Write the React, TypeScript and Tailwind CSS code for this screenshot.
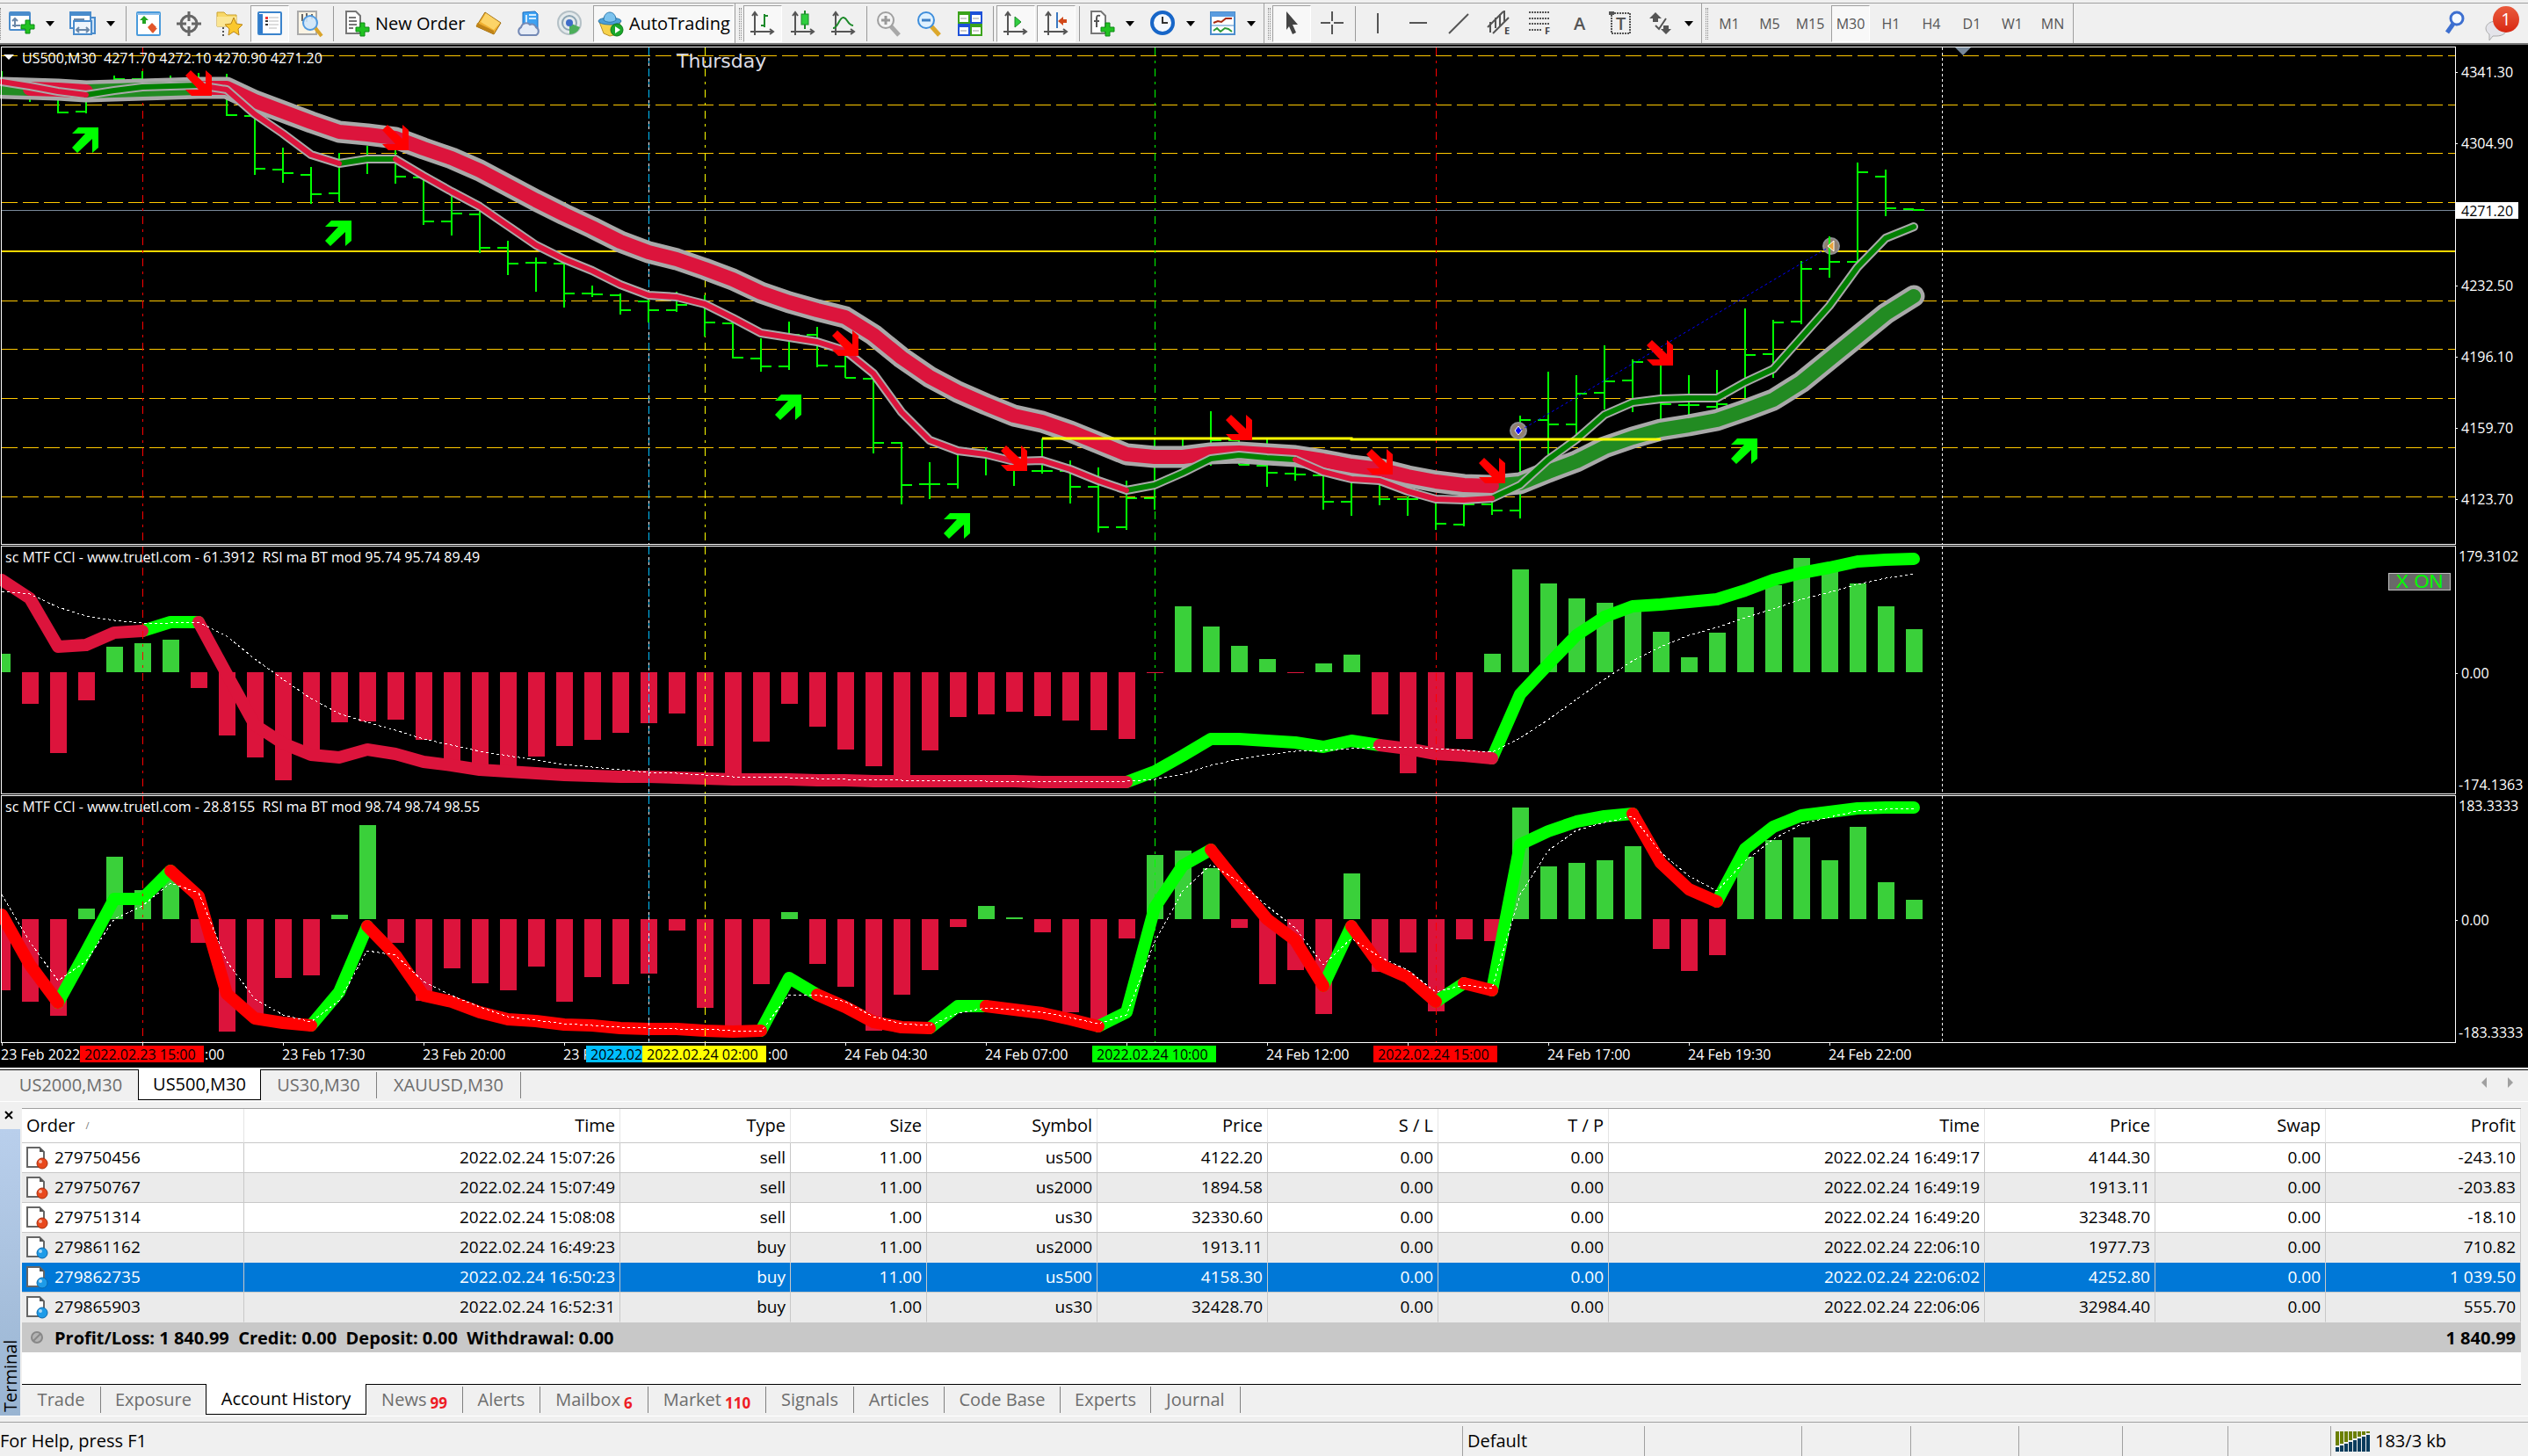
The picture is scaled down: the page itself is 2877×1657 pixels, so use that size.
import React from 'react'
import clsx from 'clsx'

const CRIMSON = '#dc143c'
const LIME = '#00ff00'
const RED = '#ff0000'
const GREEN = '#008000'
const FOREST = '#228b22'
const GOLD = '#ffc800'

// Bars are spaced evenly, the three chart windows share the same x axis
const barX = (i: number) => 2 + i * 32

// [high, low, open, close]
type Bar = [number, number, number | null, number | null]

const bars: Bar[] = [
  [81, 100, null, null], [90, 116, null, null], [108, 129, null, 128], [108, 129, 127, null],
  [86, 104, null, 90], [81, 100, 90, null], [86, 100, null, null], [83, 100, null, null],
  [84, 132, null, 131], [130, 199, 132, 192], [168, 208, 193, 197], [190, 232, 199, 221],
  [174, 230, 220, null], [166, 198, null, null], [170, 209, null, 201], [200, 256, 202, 252],
  [220, 268, 252, 243], [240, 288, 244, 282], [274, 313, 282, 300], [293, 332, 299, 299],
  [299, 350, 300, 334], [325, 338, 334, 335], [334, 358, 336, 353], [337, 367, 343, 353],
  [332, 355, 353, 347], [336, 383, null, 367], [368, 408, 368, 407], [385, 423, 408, 417],
  [366, 421, 417, 381], [372, 418, 381, 416], [385, 430, 417, 430], [425, 516, 431, 504],
  [503, 574, 504, 552], [526, 568, 551, 551], [515, 556, 551, null], [509, 541, null, null],
  [528, 553, null, null], [499, 539, 536, 536], [524, 573, 536, 554], [532, 606, 554, 600],
  [547, 603, 600, 567], [500, 580, 567, null], [500, 540, null, null], [468, 530, null, 501],
  [500, 529, 501, 529], [500, 554, 530, 538], [520, 547, 539, 540], [530, 580, 541, 571],
  [550, 587, 571, null], [548, 575, null, 568], [565, 587, 568, 568], [571, 603, null, 596],
  [574, 599, 597, 574], [571, 586, 574, 581], [473, 590, 581, 478], [423, 520, 478, 483],
  [427, 497, 483, 448], [393, 466, 447, 434], [409, 469, 433, 412], [412, 477, 412, 460],
  [427, 472, 461, 461], [421, 467, 463, 460], [351, 453, null, 404], [364, 430, 403, 367],
  [297, 369, 366, 306], [269, 316, 306, 298], [185, 298, 298, 196], [193, 246, 201, 237],
  [238, 240, 238, 239],
]

const slowMa = [
  100, 101, 102, 104, 103, 102, 101, 100, 100, 115, 127, 139, 150, 153, 157, 169, 180, 194, 211,
  228, 244, 259, 275, 287, 295, 306, 318, 333, 344, 353, 361, 381, 407, 429, 446, 460, 473, 480,
  491, 504, 517, 520, 520, 516, 515, 517, 519, 524, 530, 534, 542, 548, 552, 553, 550, 537, 525,
  509, 498, 489, 484, 478, 467, 455, 435, 409, 383, 357, 337,
]

const fastMa = [
  93, 98, 104, 108, 103, 99, 98, 97, 102, 130, 152, 176, 186, 181, 181, 200, 218, 235, 257, 279,
  295, 308, 324, 336, 338, 346, 362, 379, 384, 389, 399, 425, 469, 501, 513, 517, 525, 524, 534,
  547, 558, 552, 538, 522, 518, 521, 523, 537, 545, 547, 559, 568, 569, 567, 552, 523, 500, 472,
  458, 454, 453, 453, 435, 420, 384, 348, 304, 271, 258,
]

type Run = [from: number, to: number, color: string]

const slowRuns: Run[] = [[0, 1, FOREST], [3, 7, FOREST], [53, 68, FOREST], [1, 3, CRIMSON], [7, 53, CRIMSON]]
const fastRuns: Run[] = [
  [3, 7, GREEN], [12, 14, GREEN], [40, 46, GREEN], [53, 68, GREEN],
  [0, 3, CRIMSON], [7, 12, CRIMSON], [14, 40, CRIMSON], [46, 53, CRIMSON],
]

const cciSlow = [
  21, -36, -92, -32, 29, 33, 37, -18, -72, -97, -123, -95, -57, -56, -54, -77, -102, -108, -110,
  -96, -84, -77, -69, -58, -47, -84, -119, -79, -36, -62, -88, -107, -119, -89, -51, -48, -45, -50,
  -55, -66, -76, -1, 75, 52, 30, 15, -1, 10, 20, -48, -115, -92, -76, 21, 117, 101, 84, 79, 72, 46,
  17, 45, 74, 99, 130, 116, 101, 75, 49,
]
const rsiSlow = [
  660, 681, 736, 734, 720, 718, 708, 708, 767, 825, 846, 859, 862, 853, 858, 867, 871, 876, 878,
  880, 882, 883, 884, 884, 885, 886, 887, 887, 887, 888, 888, 889, 889, 889, 889, 889, 889, 890,
  890, 890, 890, 878, 860, 841, 841, 843, 845, 850, 843, 848, 852, 858, 860, 863, 790, 756, 723,
  702, 690, 688, 685, 682, 672, 660, 652, 646, 639, 637, 636,
]
const signalSlow = [
  673, 676, 691, 701, 706, 709, 709, 708, 724, 750, 773, 795, 812, 822, 831, 841, 848, 855, 860,
  865, 870, 873, 876, 879, 880, 882, 884, 884, 885, 886, 887, 887, 888, 888, 888, 889, 889, 889,
  889, 889, 889, 887, 881, 871, 864, 859, 855, 854, 852, 850, 850, 852, 854, 856, 840, 819, 796,
  773, 752, 736, 723, 714, 703, 693, 682, 674, 665, 658, 653,
]
const rsiSlowRuns: Run[] = [
  [5, 7, LIME], [40, 49, LIME], [53, 68, LIME], [0, 5, CRIMSON], [7, 40, CRIMSON], [49, 53, CRIMSON],
]

const cciFast = [
  -81, -94, -110, 12, 71, 33, 53, -27, -128, -114, -67, -64, 5, 107, -27, -93, -56, -73, -81, -54,
  -94, -66, -74, -62, -13, -101, -125, -74, 8, -51, -77, -127, -86, -58, -9, 15, 2, -15, -106, -117,
  -22, 73, 78, 58, -10, -74, -58, -108, 52, -60, -38, -105, -23, -25, 127, 60, 64, 67, 83, -34, -59,
  -41, 71, 90, 93, 67, 105, 42, 22,
]
const rsiFast = [
  1041, 1098, 1141, 1083, 1023, 1023, 991, 1020, 1131, 1159, 1164, 1167, 1129, 1054, 1087, 1133,
  1140, 1152, 1160, 1162, 1166, 1167, 1170, 1171, 1171, 1173, 1174, 1173, 1113, 1132, 1146, 1163,
  1169, 1170, 1145, 1145, 1149, 1153, 1160, 1168, 1152, 1033, 985, 967, 1007, 1046, 1070, 1122,
  1054, 1098, 1112, 1140, 1119, 1127, 961, 946, 935, 929, 926, 982, 1012, 1026, 966, 941, 928, 924,
  920, 919, 919,
]
const signalFast = [
  1018, 1072, 1116, 1094, 1046, 1031, 1005, 1016, 1094, 1137, 1155, 1163, 1139, 1082, 1087, 1117,
  1133, 1146, 1157, 1161, 1165, 1167, 1169, 1170, 1171, 1171, 1173, 1174, 1132, 1132, 1140, 1157,
  1165, 1167, 1153, 1147, 1149, 1152, 1158, 1165, 1155, 1072, 1014, 984, 1003, 1031, 1056, 1098,
  1068, 1089, 1104, 1129, 1121, 1125, 1018, 968, 945, 936, 929, 970, 997, 1014, 980, 955, 938, 930,
  923, 921, 920,
]
const rsiFastRuns: Run[] = [
  [2, 6, LIME], [11, 13, LIME], [27, 29, LIME], [33, 35, LIME], [39, 43, LIME], [47, 48, LIME],
  [51, 52, LIME], [53, 58, LIME], [61, 68, LIME],
  [0, 2, RED], [6, 11, RED], [13, 27, RED], [29, 33, RED], [35, 39, RED], [43, 47, RED],
  [48, 51, RED], [52, 53, RED], [58, 61, RED],
]

const sellArrows = [[211, 80], [435, 142], [947, 376], [1139, 507], [1395, 472], [1555, 511], [1683, 521], [1874, 387]]
const buyArrows = [[82, 145], [370, 251], [882, 449], [1074, 584], [1970, 499]]

const toPoints = (values: number[], from = 0, to = values.length - 1) =>
  values.slice(from, to + 1).map((y, i) => `${barX(from + i)},${y}`).join(' ')

const Band = ({ values, runs, width, outline }: { values: number[]; runs: Run[]; width: number; outline?: number }) => (
  <g fill="none" strokeLinejoin="round" strokeLinecap="round">
    {outline && <polyline points={toPoints(values)} stroke="#a9a9a9" strokeWidth={outline} />}
    {runs.map(([from, to, color]) => (
      <polyline key={from} points={toPoints(values, from, to)} stroke={color} strokeWidth={width} />
    ))}
  </g>
)

const VerticalMarkers = ({ top, bottom }: { top: number; bottom: number }) => {
  const markers = [
    { x: 162, color: RED },
    { x: 738, color: '#00bfff' },
    { x: 802, color: '#ffff00' },
    { x: 1314, color: LIME },
    { x: 1634, color: RED },
  ]
  return (
    <g shapeRendering="crispEdges">
      <line x1="738.5" x2="738.5" y1={top} y2={bottom} stroke="#fff" strokeDasharray="3 3" />
      <line x1="2210.5" x2="2210.5" y1={top} y2={bottom} stroke="#fff" strokeDasharray="3 3" />
      {markers.map((m) => (
        <line key={m.x} x1={m.x + 0.5} x2={m.x + 0.5} y1={top} y2={bottom} stroke={m.color} strokeDasharray="9 6 3 6" />
      ))}
    </g>
  )
}

const Frame = ({ top, bottom }: { top: number; bottom: number }) => (
  <g stroke="#fff" shapeRendering="crispEdges">
    <line x1="1" x2="100%" y1={top + 0.5} y2={top + 0.5} />
    <line x1="1" x2="100%" y1={bottom + 0.5} y2={bottom + 0.5} />
    <line x1="1.5" x2="1.5" y1={top} y2={bottom} />
  </g>
)

const PriceAxis = ({ top, bottom, labels, children, className }: {
  top: number
  bottom: number
  labels: [string, number, boolean?][]
  children?: React.ReactNode
  className: string
}) => (
  <svg className={clsx('w-[83px] shrink-0', className)}>
    <g transform={`translate(0 ${-top})`} fontSize="16" fill="#fff">
      <line x1="0.5" x2="0.5" y1={top} y2={bottom + 1} stroke="#fff" />
      {labels.map(([text, y, tick]) => (
        <g key={text}>
          {tick && <line x1="0" x2="3" y1={y + 0.5} y2={y + 0.5} stroke="#fff" />}
          <text x={text.length > 7 ? 4 : 7} y={y + 6}>{text}</text>
        </g>
      ))}
      {children}
    </g>
  </svg>
)

const PriceChart = () => (
  <div className="flex">
    <svg className="h-[568px] min-w-0 flex-1">
      <g transform="translate(0 -53)">
        <g stroke={GOLD} strokeDasharray="18 6" shapeRendering="crispEdges">
          {[63, 119, 174, 230, 342, 397, 453, 509, 565].map((y) => (
            <line key={y} x1="2" x2="100%" y1={y + 0.5} y2={y + 0.5} />
          ))}
        </g>
        <line x1="2" x2="100%" y1="239.5" y2="239.5" stroke="#778899" />
        <line x1="2" x2="100%" y1="286" y2="286" stroke="#ffd700" strokeWidth="2" />
        <VerticalMarkers top={54} bottom={619} />

        <g stroke={LIME} strokeWidth="2" shapeRendering="crispEdges">
          {bars.map(([high, low, open, close], i) => (
            <g key={i}>
              <line x1={barX(i)} x2={barX(i)} y1={high} y2={low} />
              {open !== null && <line x1={barX(i) - 12} x2={barX(i)} y1={open} y2={open} />}
              {close !== null && <line x1={barX(i)} x2={barX(i) + 12} y1={close} y2={close} />}
            </g>
          ))}
        </g>

        <Band values={slowMa} runs={slowRuns} width={16} outline={25} />
        <Band values={fastMa} runs={fastRuns} width={6} outline={10} />

        <polyline points="1186,499 1538,499 1538,500 1890,500" fill="none" stroke="#ffff00" strokeWidth="3" />

        <g>
          <circle cx="1728" cy="490" r="9" fill="#918070" stroke="#8f8f94" strokeWidth="2" />
          <path d="M1728 485l4 5-4 5-4-5z" fill="#00f" stroke="#fff" strokeWidth="1" />
          <circle cx="2084" cy="280" r="9" fill="#918070" stroke="#8f8f94" strokeWidth="2" />
          <line x1="2082" x2="2082" y1="269" y2="292" stroke={LIME} strokeWidth="2" />
          <path d="M2087 274v12l-7-6z" fill="#e8a33c" stroke="#fff" strokeWidth="1" />
          <line x1="1730" x2="2080" y1="490" y2="282" stroke="#0000ff" strokeDasharray="3 3" />
        </g>

        {sellArrows.map(([x, y]) => (
          <polygon key={x} transform={`translate(${x} ${y})`} fill={RED} points="0,6 6,0 23,16 23,0 30,6 30,29 7,29 0,22 15,22" />
        ))}
        {buyArrows.map(([x, y]) => (
          <polygon key={x} transform={`translate(${x} ${y})`} fill={LIME} points="0,23 6,29 23,13 23,29 30,23 30,0 7,0 0,7 15,7" />
        ))}

        <path d="M4 62h12l-6 6z" fill="#fff" />
        <path d="M2225 54h18l-9 9z" fill="#778899" />
        <text x="25" y="72" fontSize="16" fill="#fff" className="whitespace-pre">US500,M30  4271.70 4272.10 4270.90 4271.20</text>
        <text x="770" y="77" fontSize="22" fill="#dcdce4" className="font-['DejaVu_Sans',sans-serif]">Thursday</text>
        <Frame top={53} bottom={619} />
      </g>
    </svg>
    <PriceAxis
      top={53}
      bottom={619}
      className="h-[568px]"
      labels={[
        ['4341.30', 82, true], ['4304.90', 163, true], ['4232.50', 325, true],
        ['4196.10', 406, true], ['4159.70', 487, true], ['4123.70', 568, true],
      ]}
    >
      <rect x="1" y="230" width="71" height="19" fill="#fff" />
      <text x="7" y="246" fill="#000">4271.20</text>
    </PriceAxis>
  </div>
)

interface IndicatorProps {
  top: number
  zero: number
  bottom: number
  height: string
  title: string
  histogram: number[]
  line: number[]
  runs: Run[]
  signal: number[]
  labels: [string, number, boolean?][]
  toggle?: React.ReactNode
}

const IndicatorChart = ({ top, zero, bottom, height, title, histogram, line, runs, signal, labels, toggle }: IndicatorProps) => (
  <div className="relative flex">
    <svg className={clsx('min-w-0 flex-1', height)}>
      <g transform={`translate(0 ${-top})`}>
        <g shapeRendering="crispEdges">
          {histogram.map((v, i) => (
            <rect
              key={i}
              x={i === 0 ? 2 : barX(i) - 9}
              y={v > 0 ? zero - v : zero}
              width={i === 0 ? 10 : 19}
              height={Math.abs(v)}
              fill={v > 0 ? '#3ad03a' : CRIMSON}
            />
          ))}
        </g>
        <Band values={line} runs={runs} width={14} />
        <VerticalMarkers top={top + 1} bottom={bottom} />
        <polyline points={toPoints(signal)} fill="none" stroke="#fff" strokeDasharray="3 3" shapeRendering="crispEdges" />
        <text x="6" y={top + 19} fontSize="16" fill="#fff" className="whitespace-pre">{title}</text>
        <Frame top={top} bottom={bottom} />
      </g>
    </svg>
    <PriceAxis top={top} bottom={bottom} className={height} labels={labels} />
    {toggle}
  </div>
)

const timeTicks = [2, 162, 322, 482, 642, 802, 962, 1122, 1282, 1442, 1602, 1762, 1922, 2082]

// Labels are cut where a marker box takes their place
const timeLabels: [number, string][] = [
  [1, '23 Feb 2022'], [233, ':00'], [321, '23 Feb 17:30'], [481, '23 Feb 20:00'], [641, '23 F'],
  [874, ':00'], [961, '24 Feb 04:30'], [1121, '24 Feb 07:00'], [1441, '24 Feb 12:00'],
  [1761, '24 Feb 17:00'], [1921, '24 Feb 19:30'], [2081, '24 Feb 22:00'],
]

const timeMarkers: [number, number, string, string][] = [
  [91, 141, '2022.02.23 15:00', RED],
  [667, 64, '2022.02', '#00bfff'],
  [731, 141, '2022.02.24 02:00', '#ffff00'],
  [1243, 141, '2022.02.24 10:00', LIME],
  [1563, 141, '2022.02.24 15:00', RED],
]

const TimeAxis = () => (
  <svg className="h-[28px] w-full" fontSize="16">
    {timeTicks.map((x) => (
      <line key={x} x1={x + 0.5} x2={x + 0.5} y1="0" y2="3" stroke="#fff" />
    ))}
    {timeLabels.map(([x, text]) => (
      <text key={x} x={x} y="19" fill="#fff">{text}</text>
    ))}
    {timeMarkers.map(([x, width, text, color]) => (
      <g key={x}>
        <rect x={x} y="3" width={width} height="19" fill={color} />
        <text x={x + 5} y="19" fill="#000">{text}</text>
      </g>
    ))}
  </svg>
)

/* ---------- Toolbar ---------- */

const Icon = ({ children }: { children: React.ReactNode }) => (
  <svg viewBox="0 0 30 30" className="size-[30px] shrink-0 overflow-visible" fill="none">{children}</svg>
)

const GreenPlus = ({ x, y }: { x: number; y: number }) => (
  <path transform={`translate(${x} ${y})`} d="M5 0h5v5h5v5h-5v5h-5v-5h-5v-5h5z" fill="#22c322" stroke="#0b8a12" />
)

const Page = () => <path d="M3 1h11l5 5v20h-16z" fill="#fff" stroke="#777" strokeWidth="2" />

const Axes = () => <path d="M6 3v25M1 24h25M3 6l3-4 3 4M23 21l4 3-4 3" stroke="#555" strokeWidth="2" />

const NewChartIcon = () => (
  <Icon>
    <rect x="1" y="2" width="23" height="20" rx="1" fill="#fff" stroke="#4a8ccc" strokeWidth="2" />
    <path d="M1 3h23v3h-23z" fill="#4a8ccc" />
    <path d="M7 9v10M4 12l3-3 3 3M4 17h9" stroke="#6b88a8" strokeWidth="2" />
    <GreenPlus x={14} y={11} />
  </Icon>
)

const ProfilesIcon = () => (
  <Icon>
    <rect x="9" y="8" width="20" height="18" fill="#cfe2f5" stroke="#4a8ccc" strokeWidth="2" />
    <rect x="1" y="2" width="23" height="18" fill="#fff" stroke="#4a8ccc" strokeWidth="2" />
    <path d="M1 3h23v3h-23z" fill="#4a8ccc" />
    <rect x="5" y="12" width="20" height="15" fill="#eef5fc" stroke="#4a8ccc" strokeWidth="2" />
    <path d="M8 22h14M11 19l-3 3 3 3M19 19l3 3-3 3M5 10h12" stroke="#6b88a8" strokeWidth="2" />
  </Icon>
)

const MarketWatchIcon = () => (
  <Icon>
    <rect x="2" y="2" width="26" height="26" rx="1" fill="#fff" stroke="#4a9bdc" strokeWidth="2" />
    <path d="M2 3h26v2h-26z" fill="#8fc0ea" />
    <path d="M10 6l5 5h-3v4h-4v-4h-3z" fill="#22a522" />
    <path d="M20 26l5-6h-5l-2-4-3 4 1 1z" fill="#e2562a" />
    <path d="M19 14l5 5-5 6-5-6z" fill="#e2562a" />
  </Icon>
)

const TargetIcon = () => (
  <Icon>
    <circle cx="15" cy="15" r="9" stroke="#666" strokeWidth="3" />
    <path d="M15 1v11M15 18v11M1 15h11M18 15h11" stroke="#666" strokeWidth="3" />
  </Icon>
)

const FavoritesIcon = () => (
  <Icon>
    <path d="M1 2h8l3 3h11v13h-22z" fill="#f8d868" stroke="#caa12c" />
    <path d="M1 7h22v11h-22z" fill="#fbe694" />
    <path d="M20 8l3 7 7 1-5 5 1 7-6-4-6 4 1-7-5-5 7-1z" fill="#fbc82e" stroke="#b9851a" />
    <path d="M8 19v10" stroke="#555" strokeDasharray="2 2" strokeWidth="2" />
  </Icon>
)

const NavigatorIcon = () => (
  <Icon>
    <rect x="2" y="2" width="26" height="25" rx="1" fill="#fff" stroke="#3a83cc" strokeWidth="2" />
    <path d="M3 4h4v22h-4z" fill="#2f7acb" />
    <path d="M14 8h11M14 12h11M14 16h11M14 20h9" stroke="#bbb" />
    <path d="M10 7h3v3h-3z" fill="#e33" />
    <path d="M10 11h3v2h-3zM10 15h3v2h-3z" fill="#333" />
  </Icon>
)

const TesterIcon = () => (
  <Icon>
    <rect x="1" y="1" width="21" height="26" fill="#fbf4e4" stroke="#aaa" strokeWidth="2" />
    <path d="M6 4v8M11 3v10M17 4v6" stroke="#666" strokeWidth="2" />
    <circle cx="15" cy="14" r="8" fill="#cfe7fb" fillOpacity=".9" stroke="#4f9ae0" strokeWidth="2" />
    <path d="M21 20l7 9" stroke="#d9a42b" strokeWidth="4" />
  </Icon>
)

const NewOrderIcon = () => (
  <Icon>
    <Page />
    <path d="M6 8h8M6 12h9M6 16h9M6 20h5" stroke="#777" strokeWidth="2" />
    <GreenPlus x={14} y={14} />
  </Icon>
)

const MetaEditorIcon = () => (
  <Icon>
    <path d="M11 2l18 12-8 13-20-9z" fill="#f0b030" stroke="#9c6c10" />
    <path d="M12 3l16 11-7 8-15-9z" fill="#fcd468" />
    <path d="M1 18l20 9v-4l-19-9z" fill="#c08418" />
  </Icon>
)

const VpsIcon = () => (
  <Icon>
    <path d="M8 2l14-1 3 3v18h-17z" fill="#3fa2f2" stroke="#1c6cc0" />
    <path d="M12 5v14M15 5h8M15 9h8" stroke="#d4ecff" strokeWidth="2" />
    <path d="M6 28a5 5 0 0 1 0-9 6 6 0 0 1 10-3 5 5 0 0 1 7 3 5 5 0 0 1 0 9z" fill="#e6ecf6" stroke="#7489b5" strokeWidth="2" />
  </Icon>
)

const SignalsIcon = () => (
  <Icon>
    <circle cx="15" cy="14" r="13" fill="#e4eaec" stroke="#b4c0c6" strokeWidth="2" />
    <circle cx="15" cy="14" r="8" stroke="#8aa3b2" strokeWidth="2" />
    <path d="M15 14l12 5a13 13 0 0 1-12 8z" fill="#4cae5a" />
    <circle cx="15" cy="14" r="4" fill="#3e6cc8" />
  </Icon>
)

const AutoTradingIcon = () => (
  <Icon>
    <path d="M2 13l14 3 10-4-3 15-9 2-7-3z" fill="#f6d24a" stroke="#b7902a" />
    <ellipse cx="14" cy="12" rx="13" ry="4" fill="#4da0d6" stroke="#2c78ac" />
    <path d="M7 11c0-12 14-12 14 0-4 3-10 3-14 0z" fill="#7cc3ee" stroke="#2c78ac" />
    <circle cx="22" cy="22" r="7" fill="#1aa82a" stroke="#0c7a18" />
    <path d="M20 18l6 4-6 4z" fill="#fff" />
  </Icon>
)

const BarChartIcon = () => (
  <Icon><Axes /><path d="M17 4v15M17 6h4M13 17h4" stroke="#1d8a2a" strokeWidth="2" /></Icon>
)

const CandlesIcon = () => (
  <Icon>
    <Axes />
    <path d="M17 0v21" stroke="#1d8a2a" strokeWidth="2" />
    <rect x="13" y="4" width="8" height="12" fill="#2fcf3f" stroke="#1d8a2a" />
  </Icon>
)

const LineChartIcon = () => (
  <Icon><Axes /><path d="M3 20c6 0 7-13 12-12s4 8 11 9" stroke="#1d8a2a" strokeWidth="2" /></Icon>
)

const ZoomIcon = ({ plus }: { plus?: boolean }) => (
  <Icon>
    <path d="M17 18l9 10" stroke={plus ? '#a8a8a8' : '#dca82c'} strokeWidth="5" />
    <circle cx="11" cy="11" r="9" fill={plus ? '#f4f4f4' : '#dff1ff'} stroke={plus ? '#a0a0a0' : '#3e8edc'} strokeWidth="2" />
    <path d={plus ? 'M11 6v10M6 11h10' : 'M6 11h10'} stroke={plus ? '#999' : '#3e7fc4'} strokeWidth="3" />
  </Icon>
)

const TileIcon = () => (
  <Icon>
    <path d="M1 1h14v14h-14z" fill="#3ba31b" />
    <path d="M15 1h14v14h-14z" fill="#1d50d8" />
    <path d="M1 15h14v14h-14z" fill="#1d50d8" />
    <path d="M15 15h14v14h-14z" fill="#3ba31b" />
    <path d="M3 5h10v8h-10zM17 5h10v8h-10zM3 19h10v8h-10zM17 19h10v8h-10z" fill="#fff" />
    <path d="M4 9h7M18 9h7M4 23h7M18 23h7" stroke="#999" />
  </Icon>
)

const AutoScrollIcon = () => (
  <Icon><Axes /><path d="M14 7l7 6-7 6z" fill="#2fcf3f" stroke="#1d8a2a" /></Icon>
)

const ChartShiftIcon = () => (
  <Icon>
    <Axes />
    <path d="M16 2v18" stroke="#3a78c0" strokeWidth="2" />
    <path d="M17 12l6-5v3h4v4h-4v3z" fill="#d2491a" />
  </Icon>
)

const IndicatorsIcon = () => (
  <Icon>
    <Page />
    <path d="M13 6c-3-1-4 0-4 3v10M6 12h6" stroke="#555" strokeWidth="2" />
    <GreenPlus x={14} y={14} />
  </Icon>
)

const ClockIcon = () => (
  <Icon>
    <circle cx="15" cy="14" r="12" fill="#f4f9ff" stroke="#1766c8" strokeWidth="4" />
    <path d="M15 7v7h6" stroke="#333" strokeWidth="2" />
  </Icon>
)

const TemplatesIcon = () => (
  <Icon>
    <rect x="1" y="2" width="27" height="25" fill="#fff" stroke="#4a8ccc" strokeWidth="2" />
    <path d="M1 2h27v5h-27z" fill="#5a9cdf" />
    <path d="M4 14l5-2 4 1 5-4h7" stroke="#a82a10" strokeWidth="2" />
    <path d="M2 17h25" stroke="#4a8ccc" />
    <path d="M4 23l4-3 4 4 5-4 4 1 4 3" stroke="#2b9b35" strokeWidth="2" />
  </Icon>
)

const CursorIcon = () => <Icon><path d="M9 1l13 15h-6l4 9-4 2-4-9-3 4z" fill="#444" /></Icon>
const CrosshairIcon = () => <Icon><path d="M15 1v11M15 16v11M2 14h11M17 14h11" stroke="#555" strokeWidth="2" /></Icon>
const VLineIcon = () => <Icon><path d="M15 3v23" stroke="#555" strokeWidth="2" /></Icon>
const HLineIcon = () => <Icon><path d="M5 14h20" stroke="#555" strokeWidth="2" /></Icon>
const TrendIcon = () => <Icon><path d="M4 26l22-22" stroke="#555" strokeWidth="2" /></Icon>

const ChannelIcon = () => (
  <Icon>
    <path d="M2 19l18-18M8 26l18-18M5 13v12M11 8v12M16 4v14M21 0v13" stroke="#555" strokeWidth="2" />
    <text x="21" y="27" fontSize="11" fontWeight="700" fill="#444">E</text>
  </Icon>
)

const FiboIcon = () => (
  <Icon>
    <path d="M3 2h24M3 9h24M3 15h24M3 22h15" stroke="#555" strokeWidth="2" strokeDasharray="2 1" />
    <text x="21" y="27" fontSize="11" fontWeight="700" fill="#444">F</text>
  </Icon>
)

const TextIcon = () => <Icon><text x="8" y="22" fontSize="20" fontWeight="600" fill="#555">A</text></Icon>

const LabelIcon = () => (
  <Icon>
    <rect x="5" y="3" width="21" height="23" stroke="#555" strokeWidth="2" strokeDasharray="2 1" />
    <path d="M2 1h6v4h-6z" fill="#555" />
    <text x="10" y="22" fontSize="20" fontWeight="600" fill="#555">T</text>
  </Icon>
)

const ArrowsIcon = () => (
  <Icon>
    <path d="M9 2l7 7h-4v4h-6v-4h-4zM21 27l-6-6h3v-4h6v4h3z" fill="#555" />
    <path d="M9 17l4 4 8-12" stroke="#555" strokeWidth="2" />
  </Icon>
)

const Slot = ({ label, pressed, children }: { label: string; pressed?: boolean; children: React.ReactNode }) => (
  <button
    type="button"
    aria-label={label}
    aria-pressed={pressed}
    className={clsx(
      'mx-px flex h-[42px] w-11 shrink-0 items-center justify-center border',
      pressed ? 'border-t-[#a0a0a0] border-r-white border-b-white border-l-[#a0a0a0] bg-[#f8f8f8]' : 'border-transparent',
    )}
  >
    {children}
  </button>
)

const Dropdown = ({ label }: { label: string }) => (
  <button type="button" aria-label={label} className="flex h-[42px] w-[23px] shrink-0 items-center pl-1">
    <svg className="h-[6px] w-[10px]"><path d="M0 0h10l-5 6z" fill="#000" /></svg>
  </button>
)

const Separator = () => (
  <div className="flex h-10 w-[6px] shrink-0 justify-center"><div className="w-px bg-[#999]" /></div>
)

const Grip = () => (
  <div className="mr-px ml-1 h-9 w-[3px] shrink-0 border-x border-dotted border-[#888]" />
)

const Group = ({ children }: { children: React.ReactNode }) => (
  <div className="flex h-full shrink-0 items-center border-r border-[#a0a0a0]">{children}</div>
)

const timeframes = ['M1', 'M5', 'M15', 'M30', 'H1', 'H4', 'D1', 'W1', 'MN']

const Toolbar = () => (
  <header className="flex h-[48px] items-center border-t border-b-2 border-t-[#a0a0a0] border-b-[#777]">
    <Group>
      <div className="h-9 w-[2px] border-l border-dotted border-[#888]" />
      <Slot label="New chart"><NewChartIcon /></Slot>
      <Dropdown label="New chart menu" />
      <Slot label="Profiles"><ProfilesIcon /></Slot>
      <Dropdown label="Profiles menu" />
      <Separator />
      <Slot label="Market watch"><MarketWatchIcon /></Slot>
      <Slot label="Data window"><TargetIcon /></Slot>
      <Slot label="Favorites"><FavoritesIcon /></Slot>
      <Slot label="Terminal" pressed><NavigatorIcon /></Slot>
      <Slot label="Strategy tester"><TesterIcon /></Slot>
      <Separator />
      <button type="button" className="flex h-[42px] w-[151px] shrink-0 items-center gap-[6px] pl-[9px] text-[20px] whitespace-nowrap">
        <NewOrderIcon />
        New Order
      </button>
      <Slot label="MetaEditor"><MetaEditorIcon /></Slot>
      <Slot label="Virtual hosting"><VpsIcon /></Slot>
      <Slot label="Signals"><SignalsIcon /></Slot>
      <button
        type="button"
        aria-pressed="true"
        className="mr-px ml-1 flex h-[42px] w-[160px] shrink-0 items-center gap-[6px] border border-t-[#a0a0a0] border-r-white border-b-white border-l-[#a0a0a0] bg-[#f8f8f8] pl-1 text-[20px] whitespace-nowrap"
      >
        <AutoTradingIcon />
        AutoTrading
      </button>
    </Group>
    <Group>
      <Grip />
      <Slot label="Bar chart" pressed><BarChartIcon /></Slot>
      <Slot label="Candlesticks"><CandlesIcon /></Slot>
      <Slot label="Line chart"><LineChartIcon /></Slot>
      <Separator />
      <Slot label="Zoom in"><ZoomIcon plus /></Slot>
      <Slot label="Zoom out"><ZoomIcon /></Slot>
      <Slot label="Tile windows"><TileIcon /></Slot>
      <Separator />
      <Slot label="Auto scroll" pressed><AutoScrollIcon /></Slot>
      <Slot label="Chart shift" pressed><ChartShiftIcon /></Slot>
      <Separator />
      <Slot label="Indicators"><IndicatorsIcon /></Slot>
      <Dropdown label="Indicators menu" />
      <Slot label="Periods"><ClockIcon /></Slot>
      <Dropdown label="Periods menu" />
      <Slot label="Templates"><TemplatesIcon /></Slot>
      <Dropdown label="Templates menu" />
    </Group>
    <Group>
      <Grip />
      <Slot label="Cursor" pressed><CursorIcon /></Slot>
      <Slot label="Crosshair"><CrosshairIcon /></Slot>
      <Separator />
      <Slot label="Vertical line"><VLineIcon /></Slot>
      <Slot label="Horizontal line"><HLineIcon /></Slot>
      <Slot label="Trendline"><TrendIcon /></Slot>
      <Slot label="Channel"><ChannelIcon /></Slot>
      <Slot label="Fibonacci"><FiboIcon /></Slot>
      <Slot label="Text"><TextIcon /></Slot>
      <Slot label="Text label"><LabelIcon /></Slot>
      <Slot label="Arrows"><ArrowsIcon /></Slot>
      <Dropdown label="Arrows menu" />
    </Group>
    <Group>
      <Grip />
      {timeframes.map((t) => (
        <Slot key={t} label={t} pressed={t === 'M30'}>
          <span className="text-[16px] text-[#555]">{t}</span>
        </Slot>
      ))}
    </Group>
    <div className="ml-auto flex items-center gap-4 pr-[10px]">
      <button type="button" aria-label="Search">
        <Icon>
          <path d="M11 15l-7 10" stroke="#3d6fd0" strokeWidth="5" />
          <circle cx="15" cy="9" r="7" fill="#f6faff" stroke="#3d6fd0" strokeWidth="3" />
        </Icon>
      </button>
      <button type="button" aria-label="Notifications" className="relative flex h-10 w-[40px] items-end">
        <svg className="h-6 w-7" viewBox="0 0 28 24">
          <path d="M14 1c16 0 16 17 0 17h-4l-4 5v-7c-8-6-3-15 8-15z" fill="#e4e4ea" stroke="#aaa" />
        </svg>
        <span className="absolute top-0 right-0 flex size-[30px] items-center justify-center rounded-full bg-linear-to-b from-[#ea5a3c] to-[#d8240e] text-[20px] text-white">1</span>
      </button>
    </div>
  </header>
)

/* ---------- Chart tabs and terminal ---------- */

interface TabItem {
  name: string
  width: string
  active?: boolean
  count?: number
}

const chartTabs: TabItem[] = [
  { name: 'US2000,M30', width: 'w-[157px] pl-1' },
  { name: 'US500,M30', width: 'w-[140px]', active: true },
  { name: 'US30,M30', width: 'w-[132px]' },
  { name: 'XAUUSD,M30', width: 'w-[164px]' },
]

const terminalTabs: TabItem[] = [
  { name: 'Trade', width: 'w-[90px]' },
  { name: 'Exposure', width: 'w-[119px]' },
  { name: 'Account History', width: 'w-[183px]', active: true },
  { name: 'News', width: 'w-[110px]', count: 99 },
  { name: 'Alerts', width: 'w-[88px]' },
  { name: 'Mailbox', width: 'w-[123px]', count: 6 },
  { name: 'Market', width: 'w-[134px]', count: 110 },
  { name: 'Signals', width: 'w-[100px]' },
  { name: 'Articles', width: 'w-[103px]' },
  { name: 'Code Base', width: 'w-[132px]' },
  { name: 'Experts', width: 'w-[103px]' },
  { name: 'Journal', width: 'w-[102px]' },
]

const Tabs = ({ tabs }: { tabs: TabItem[] }) => (
  <div role="tablist" className="flex h-[35px] items-start">
    {tabs.map((tab, i) => (
      <button
        key={tab.name}
        type="button"
        role="tab"
        aria-selected={!!tab.active}
        className={clsx(
          'flex shrink-0 items-center justify-center gap-1 text-[20px] leading-6 whitespace-nowrap',
          tab.width,
          tab.active
            ? '-mt-px h-[35px] border border-t-0 border-black bg-white text-black'
            : 'mt-[2px] h-[30px] text-[#6d6d6d]',
          !tab.active && !tabs[i + 1]?.active && 'border-r border-[#808080]',
        )}
      >
        {tab.name}
        {tab.count && <span className="mt-2 text-[17px] font-bold text-[#ee1c25]">{tab.count}</span>}
      </button>
    ))}
  </div>
)

const columns = [
  { name: 'Order', width: 'w-[253px]' },
  { name: 'Time', width: 'w-[428px]' },
  { name: 'Type', width: 'w-[194px]' },
  { name: 'Size', width: 'w-[155px]' },
  { name: 'Symbol', width: 'w-[194px]' },
  { name: 'Price', width: 'w-[194px]' },
  { name: 'S / L', width: 'w-[194px]' },
  { name: 'T / P', width: 'w-[194px]' },
  { name: 'Time', width: 'w-[428px]' },
  { name: 'Price', width: 'w-[194px]' },
  { name: 'Swap', width: 'w-[194px]' },
  { name: 'Profit', width: '' },
]

const orders = [
  ['279750456', '2022.02.24 15:07:26', 'sell', '11.00', 'us500', '4122.20', '0.00', '0.00', '2022.02.24 16:49:17', '4144.30', '0.00', '-243.10'],
  ['279750767', '2022.02.24 15:07:49', 'sell', '11.00', 'us2000', '1894.58', '0.00', '0.00', '2022.02.24 16:49:19', '1913.11', '0.00', '-203.83'],
  ['279751314', '2022.02.24 15:08:08', 'sell', '1.00', 'us30', '32330.60', '0.00', '0.00', '2022.02.24 16:49:20', '32348.70', '0.00', '-18.10'],
  ['279861162', '2022.02.24 16:49:23', 'buy', '11.00', 'us2000', '1913.11', '0.00', '0.00', '2022.02.24 22:06:10', '1977.73', '0.00', '710.82'],
  ['279862735', '2022.02.24 16:50:23', 'buy', '11.00', 'us500', '4158.30', '0.00', '0.00', '2022.02.24 22:06:02', '4252.80', '0.00', '1 039.50'],
  ['279865903', '2022.02.24 16:52:31', 'buy', '1.00', 'us30', '32428.70', '0.00', '0.00', '2022.02.24 22:06:06', '32984.40', '0.00', '555.70'],
]

const SELECTED = '279862735'

const OrderIcon = ({ type }: { type: string }) => (
  <svg className="h-[27px] w-[25px] shrink-0" viewBox="0 0 25 27">
    <path d="M1 2h14l5 5v17h-19z" fill="#fff" stroke="#666" strokeWidth="2" />
    <path d="M15 2v5h5z" fill="#555" />
    <circle cx="18" cy="20" r="6" fill={type === 'sell' ? '#e8481c' : '#1d9be8'} stroke={type === 'sell' ? '#a82c08' : '#0c68ac'} />
    <circle cx="16" cy="18" r="2" fill="#fff" fillOpacity=".6" />
  </svg>
)

const OrdersTable = () => (
  <table className="w-full table-fixed border-separate border-spacing-0 text-[19px]">
    <thead>
      <tr className="h-[39px]">
        {columns.map((c, i) => (
          <th
            key={i}
            scope="col"
            className={clsx('border-r border-b border-r-[#e5e5e5] border-b-[#c8c8c8] px-[5px] py-0 text-[20px] leading-[38px] font-normal', c.width, i === 0 ? 'text-left' : 'text-right')}
          >
            {c.name}
            {i === 0 && <span className="ml-3 align-[3px] text-[11px] leading-3 text-[#777]">/</span>}
          </th>
        ))}
      </tr>
    </thead>
    <tbody>
      {orders.map((row, r) => (
        <tr
          key={row[0]}
          aria-selected={row[0] === SELECTED}
          className={clsx('h-[34px]', row[0] === SELECTED ? 'bg-[#0078d7] text-white' : r % 2 ? 'bg-[#ebebeb]' : 'bg-white')}
        >
          {row.map((cell, i) => (
            <td
              key={i}
              className={clsx('border-r border-b border-r-[#c8c8c8] px-[5px] py-0 leading-[33px]', i > 0 && 'text-right', r === 3 || r === 5 ? 'border-b-transparent' : 'border-b-[#c8c8c8]')}
            >
              {i === 0 ? (
                <span className="flex items-center gap-[7px]">
                  <OrderIcon type={row[2]} />
                  {cell}
                </span>
              ) : cell}
            </td>
          ))}
        </tr>
      ))}
    </tbody>
    <tfoot>
      <tr className="h-[34px] bg-[#c8c8c8] text-[20px] leading-[33px] font-bold">
        <td colSpan={11} className="px-[5px] py-0">
          <span className="flex items-center gap-[7px] whitespace-pre">
            <svg className="h-4 w-[25px]" viewBox="0 0 25 16">
              <circle cx="12" cy="8" r="6" fill="#b4b4b4" stroke="#888" strokeWidth="2" />
              <path d="M8 12l8-8" stroke="#888" strokeWidth="2" />
            </svg>
            Profit/Loss: 1 840.99  Credit: 0.00  Deposit: 0.00  Withdrawal: 0.00
          </span>
        </td>
        <td className="px-[6px] py-0 text-right">1 840.99</td>
      </tr>
    </tfoot>
  </table>
)

const Terminal = () => (
  <section className="flex flex-1 border-b border-white">
    <div className="flex w-[25px] shrink-0 flex-col pr-[2px]">
      <button type="button" aria-label="Close" className="h-6 pl-[5px]">
        <svg className="-mt-2 size-[10px]" viewBox="0 0 10 10"><path d="M1 1l8 8M9 1l-8 8" stroke="#000" strokeWidth="2" /></svg>
      </button>
      <div className="flex flex-1 rotate-180 items-center justify-start bg-linear-to-t from-[#b9cfec] to-[#99b4d1] pt-1 text-[20px] leading-[23px] [writing-mode:vertical-rl]">
        Terminal
      </div>
    </div>
    <div className="mr-2 flex min-w-0 flex-1 flex-col border-t border-[#a0a0a0]">
      <div className="flex-1 border-b border-black bg-white">
        <OrdersTable />
      </div>
      <Tabs tabs={terminalTabs} />
    </div>
  </section>
)

const statusCells = ['w-[179px]', 'w-[124px]', 'w-[123px]', 'w-[118px]', 'w-[120px]', 'w-[117px]']

const StatusBar = () => (
  <footer className="mt-[6px] flex h-[39px] shrink-0 border-t border-[#a0a0a0] text-[20px] leading-6">
    <div className="flex min-w-0 flex-1 items-center pt-1">For Help, press F1</div>
    <div className="mt-1 flex w-[207px] items-center border-l border-[#a0a0a0] pl-[5px]">Default</div>
    {statusCells.map((w, i) => (
      <div key={i} className={clsx('mt-1 border-l border-[#a0a0a0]', w)} />
    ))}
    <div className="mt-1 flex w-[225px] items-center gap-[6px] border-l border-[#a0a0a0] pl-[5px]">
      <svg className="h-[23px] w-[39px]">
        {[0, 1, 2, 3, 4, 5, 6, 7].map((i) => (
          <g key={i}>
            <rect x={i * 5} y="0" width="4" height={16 - i * 2} fill="#6b7f00" />
            <rect x={i * 5} y={18 - i * 2} width="4" height={5 + i * 2} fill="#0a3c5c" />
          </g>
        ))}
      </svg>
      <span>183/3 kb</span>
    </div>
  </footer>
)

const App = () => (
  <div className="flex min-h-screen flex-col bg-[#f0f0f0] pt-[3px] font-['Open_Sans','Noto_Sans',sans-serif] text-black">
    <Toolbar />
    <main className="shrink-0 overflow-hidden bg-black pt-[2px]">
      <PriceChart />
      <IndicatorChart
        top={621}
        zero={765}
        bottom={903}
        height="h-[284px]"
        title="sc MTF CCI - www.truetl.com - 61.3912  RSI ma BT mod 95.74 95.74 89.49"
        histogram={cciSlow}
        line={rsiSlow}
        runs={rsiSlowRuns}
        signal={signalSlow}
        labels={[['179.3102', 633], ['0.00', 766, true], ['-174.1363', 893]]}
        toggle={
          <button type="button" className="absolute top-[31px] right-[88px] h-5 w-[71px] border border-[#c0c0c0] bg-[#696969] font-['Liberation_Sans',sans-serif] text-[22px] leading-[18px] text-[#00ff00]">
            X ON
          </button>
        }
      />
      <IndicatorChart
        top={905}
        zero={1046}
        bottom={1186}
        height="h-[282px]"
        title="sc MTF CCI - www.truetl.com - 28.8155  RSI ma BT mod 98.74 98.74 98.55"
        histogram={cciFast}
        line={rsiFast}
        runs={rsiFastRuns}
        signal={signalFast}
        labels={[['183.3333', 917], ['0.00', 1047, true], ['-183.3333', 1175]]}
      />
      <TimeAxis />
    </main>
    <nav className="mb-[7px] flex shrink-0 items-start justify-between border-t-2 border-b border-white">
      <div className="flex-1 border-t border-black">
        <Tabs tabs={chartTabs} />
      </div>
      <div className="flex h-[36px] items-center gap-6 border-t border-black pr-4 pb-2">
        <button type="button" aria-label="Scroll left"><svg className="h-[12px] w-[7px]"><path d="M7 0v12l-6-6z" fill="#a0a0a0" /></svg></button>
        <button type="button" aria-label="Scroll right"><svg className="h-[12px] w-[7px]"><path d="M0 0v12l6-6z" fill="#a0a0a0" /></svg></button>
      </div>
    </nav>
    <Terminal />
    <StatusBar />
  </div>
)

export default App
